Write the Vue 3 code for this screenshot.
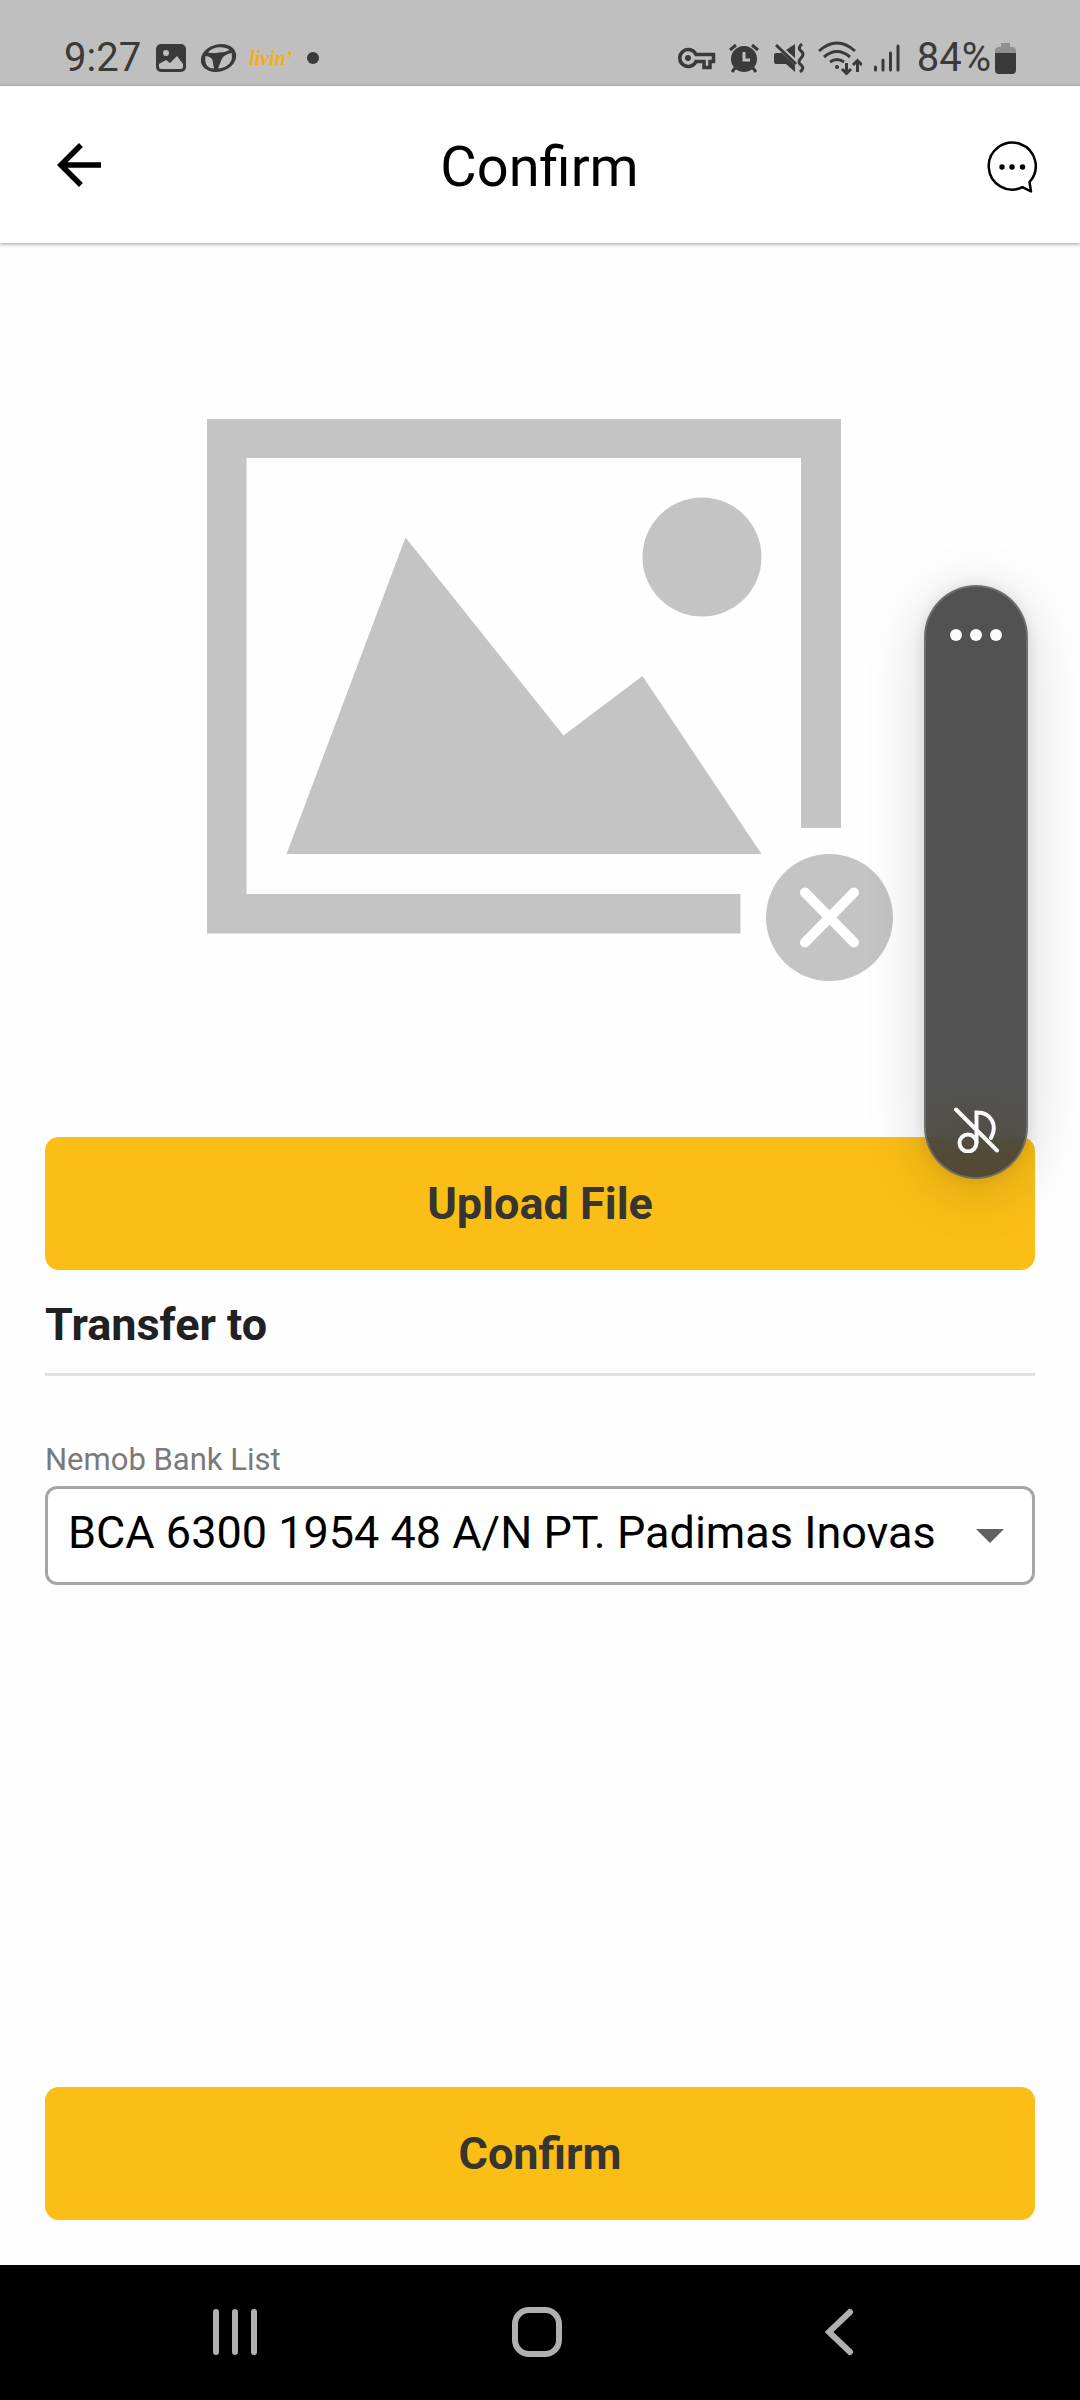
<script setup>
import { ref } from 'vue'

const banks = ['BCA 6300 1954 48 A/N PT. Padimas Inovas']
const bank = ref(banks[0])
</script>

<template>
  <div class="screen">
    <div class="status">
      <div class="status-group">
        <span class="status-text">9:27</span>
        <svg width="36" height="30" viewBox="0 0 36 30">
          <path fill="#3a3a3a" fill-rule="evenodd" d="M8 1h20a5 5 0 0 1 5 5v18a5 5 0 0 1-5 5H8a5 5 0 0 1-5-5V6a5 5 0 0 1 5-5zM13 7a3 3 0 1 0 0 6 3 3 0 0 0 0-6zM6 21v3q0 2 2 2h20q2 0 2-2v-3l-6-8-7 7-4-3z" />
        </svg>
        <svg width="36" height="30" viewBox="0 0 36 30">
          <ellipse cx="17.500" cy="15" rx="18" ry="13.500" transform="rotate(-16 17.500 15)" fill="#3a3a3a" />
          <g fill="#bfbfbf">
            <path d="M7 9.500Q11 4.500 18 4.300 25 4 28.500 7 24 9.500 18 9.500 12 10.500 7 9.500z" />
            <path d="M4.500 13Q10 13.500 11.500 17L13 25.500Q7 25.500 5 21 3.500 17 4.500 13z" />
            <path d="M30.500 10Q24 11 21 15.500L17 25.500Q24 25 28.500 20.500 32 16 30.500 10z" />
          </g>
        </svg>
        <span class="brand">livin’</span>
        <span class="dot"></span>
      </div>
      <div class="status-group">
        <svg width="38" height="30" viewBox="0 0 38 30">
          <path d="M18 11.500h17.500v7H32v6h-6v-6h-8a8.500 8.500 0 1 1 0-7z" fill="none" stroke="#3a3a3a" stroke-width="3.500" />
          <circle cx="10" cy="15" r="3" fill="#3a3a3a" />
        </svg>
        <svg width="32" height="30" viewBox="0 0 32 30">
          <circle cx="16" cy="16" r="13" fill="#3a3a3a" />
          <path d="M2 7l6-5M30 7l-6-5M7 25l-3 4M25 25l3 4" stroke="#3a3a3a" stroke-width="3" />
          <path d="M16 9v8h6" fill="none" stroke="#bfbfbf" stroke-width="3" />
        </svg>
        <svg width="34" height="30" viewBox="0 0 34 30">
          <path fill="#3a3a3a" d="M2 12q0-2 2-2h6l13 12v7l-9-8H4q-2 0-2-2zM14 7l9-6v14z" />
          <path d="M4 2l20 19M30 1q-5 4-1 7t0 7 0 7-1 7" fill="none" stroke="#3a3a3a" stroke-width="3" />
        </svg>
        <svg width="44" height="34" viewBox="0 0 44 34" fill="none" stroke="#3a3a3a" stroke-width="3">
          <path d="M1 10q18-16 36 0M6 16q13-11 26 0M12 21q7-5 14 0" />
          <path d="M28.500 22v10M24 28l4.500 4.500L33 28M39.500 31V20M35 24l4.500-4.500L44 24" />
          <circle cx="19" cy="26" r="2" fill="#3a3a3a" stroke="none" />
        </svg>
        <svg width="31" height="30" viewBox="0 0 31 30" stroke="#3a3a3a" stroke-width="3" stroke-linecap="round">
          <path d="M1.500 24v3M9 17v10M16.500 10v17M24 3v24" />
        </svg>
        <span class="battery">
          <span class="status-text">84%</span>
          <svg width="21" height="32" viewBox="0 0 21 32">
            <path fill="#8f8f8f" d="M6 1h9v4h2q4 0 4 4v5H0V9q0-4 4-4h2z" />
            <path fill="#3a3a3a" d="M0 11h21v17q0 4-4 4H4q-4 0-4-4z" />
          </svg>
        </span>
      </div>
    </div>

    <header class="appbar">
      <button class="icon-button" aria-label="Back">
        <svg width="66" height="66" viewBox="0 0 24 24"><path d="M20 11H7.830l5.590-5.590L12 4l-8 8 8 8 1.410-1.410L7.830 13H20z" /></svg>
      </button>
      <h1>Confirm</h1>
      <button class="icon-button" aria-label="Chat">
        <svg width="66" height="66" viewBox="0 0 66 66">
          <path d="M50.500 50A23.500 23.500 0 1 0 43.500 55.200L52 59.500z" fill="none" stroke="#000" stroke-width="2.500" stroke-linejoin="round" />
          <circle cx="23" cy="35" r="2.700" /><circle cx="33" cy="35" r="2.700" /><circle cx="43.500" cy="35" r="2.700" />
        </svg>
      </button>
    </header>

    <main>
      <svg class="preview" viewBox="45 243 990 894" role="img" aria-label="No image selected">
        <g fill="#c4c4c4">
          <path d="M207 419H841V828H801V458H246.500V894H740.500V933.500H207z" />
          <path d="M286.500 854L405.500 537.500 563.500 735.500 642.500 676 761.500 854z" />
          <circle cx="702" cy="557" r="59.500" />
          <circle cx="829.500" cy="917.500" r="63.500" />
        </g>
        <path d="M805 892.500l49 50M854 892.500l-49 50" stroke="#fff" stroke-width="10" stroke-linecap="round" />
      </svg>

      <button class="primary">Upload File</button>
      <h2>Transfer to</h2>

      <label for="bank">Nemob Bank List</label>
      <div class="select-wrap">
        <select id="bank" v-model="bank">
          <option v-for="b in banks" :key="b" :value="b">{{ b }}</option>
        </select>
        <svg class="caret" width="28" height="14" viewBox="0 0 28 14"><path d="M0 0h28L14 14z" fill="#616161" /></svg>
      </div>

      <button class="primary submit">Confirm</button>
    </main>

    <nav>
      <button aria-label="Recent apps">
        <svg width="50" height="50" viewBox="0 0 50 50"><path d="M6 5v40M25 5v40M44 5v40" stroke-width="6" stroke-linecap="round" /></svg>
      </button>
      <button aria-label="Home">
        <svg width="50" height="50" viewBox="0 0 50 50"><rect x="3" y="3" width="44" height="44" rx="14" stroke-width="6" /></svg>
      </button>
      <button aria-label="Back">
        <svg width="50" height="50" viewBox="0 0 50 50"><path d="M36 5L15 25l21 20" stroke-width="6" stroke-linecap="round" /></svg>
      </button>
    </nav>

    <aside class="volume">
      <button aria-label="More">
        <svg width="52" height="12" viewBox="0 0 52 12" fill="#fafafa"><circle cx="6" cy="6" r="6" /><circle cx="26" cy="6" r="6" /><circle cx="46" cy="6" r="6" /></svg>
      </button>
      <button aria-label="Media muted">
        <svg width="46" height="46" viewBox="0 0 46 46" fill="none" stroke="#fafafa" stroke-width="4" stroke-linecap="round">
          <circle cx="15" cy="36" r="8.500" />
          <path d="M23.500 36V5.500C38 5 45 18 38 31M3 2.500l41 41" />
        </svg>
      </button>
    </aside>
  </div>
</template>

<style>
body {
  margin: 0;
}
</style>

<style scoped>
.screen {
  position: relative;
  display: flex;
  flex-direction: column;
  min-height: 100vh;
  background: #fefefe;
  font-family: Roboto, sans-serif;
  color: #000;
}
.screen * {
  box-sizing: border-box;
}
button {
  margin: 0;
  padding: 0;
  border: 0;
  background: none;
  font-family: inherit;
}
svg {
  display: block;
  flex: none;
}
.status {
  display: flex;
  justify-content: space-between;
  height: 86px;
  padding: 30px 64px 0;
  background: #bfbfbf;
  color: #3a3a3a;
}
.status-group {
  display: flex;
  align-items: center;
  gap: 12px;
}
.status-text {
  font-size: 40px;
  line-height: 56px;
}
.brand {
  width: 46px;
  font-family: "Liberation Serif", serif;
  font-size: 20px;
  font-style: italic;
  font-weight: 700;
  color: #f5b010;
}
.dot {
  width: 12px;
  height: 12px;
  border-radius: 50%;
  background: #3a3a3a;
}
.battery {
  display: flex;
  align-items: center;
  gap: 4px;
}
.appbar {
  display: grid;
  grid-template-columns: 66px 1fr 66px;
  align-items: center;
  height: 157px;
  padding: 0 35px 0 46px;
  background: #fff;
  box-shadow: 0 1px 4px rgba(0, 0, 0, 0.4);
}
h1 {
  margin: 0;
  padding: 4px 12px 0 0;
  font-size: 56px;
  font-weight: 400;
  line-height: 66px;
  text-align: center;
}
main {
  flex: 1;
  display: flex;
  flex-direction: column;
  padding: 0 45px 45px;
}
.preview {
  width: 100%;
  height: auto;
}
.primary {
  width: 100%;
  height: 133px;
  border-radius: 14px;
  background: #fbbe16;
  color: #37352f;
  font-size: 45px;
  font-weight: 700;
}
h2 {
  margin: 0 0 64px;
  padding: 20px 0 13px;
  border-bottom: 3px solid #e0e0e0;
  color: #212121;
  font-size: 45px;
  line-height: 70px;
}
label {
  margin-bottom: 6px;
  color: #7a7a7a;
  font-size: 31px;
  line-height: 40px;
}
.select-wrap {
  position: relative;
  margin-bottom: 45px;
}
select {
  display: block;
  width: 100%;
  height: 99px;
  padding: 0 80px 6px 20px;
  border: 3px solid #a6a6a6;
  border-radius: 12px;
  appearance: none;
  background: #fff;
  color: #000;
  font-family: inherit;
  font-size: 45px;
}
.caret {
  position: absolute;
  top: 43px;
  right: 31px;
  pointer-events: none;
}
.submit {
  margin-top: auto;
}
nav {
  display: grid;
  grid-template-columns: repeat(3, 1fr);
  height: 135px;
  padding: 0 90px 2px 84px;
  background: #000;
}
nav button {
  display: flex;
  align-items: center;
  justify-content: center;
}
nav svg {
  fill: none;
  stroke: #b0b0b0;
}
.volume {
  position: absolute;
  top: 585px;
  right: 52px;
  display: flex;
  flex-direction: column;
  justify-content: space-between;
  align-items: center;
  width: 104px;
  height: 594px;
  padding: 42px 0 24px;
  border: 2px solid rgba(130, 130, 130, 0.6);
  border-radius: 52px;
  background: rgba(52, 52, 52, 0.85);
  backdrop-filter: blur(30px);
  box-shadow: 0 10px 60px rgba(0, 0, 0, 0.16), 0 0 16px rgba(0, 0, 0, 0.1);
}
</style>
